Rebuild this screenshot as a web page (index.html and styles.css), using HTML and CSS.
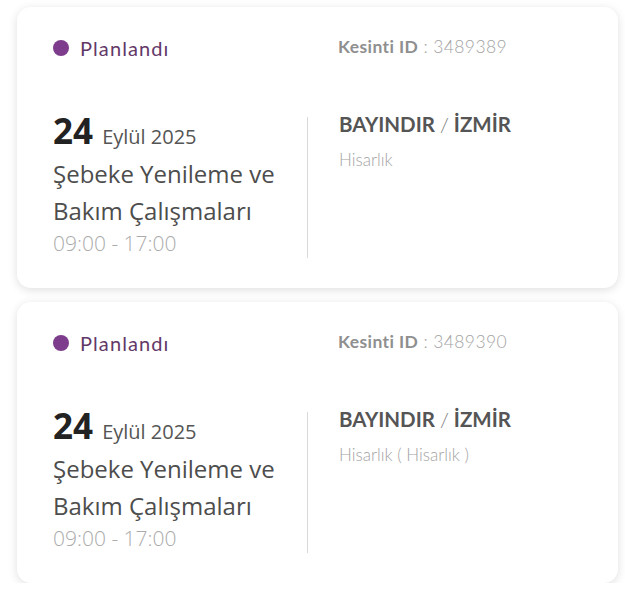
FILE: index.html
```html
<!DOCTYPE html>
<html lang="tr">
<head>
<meta charset="utf-8">
<link rel="stylesheet" href="styles.css">
</head>
<body>
<div class="list">
  <div class="card">
    <div class="top">
      <div class="status"><span class="dot"></span><span class="status-text">Planlandı</span></div>
      <div class="kid"><b>Kesinti ID</b> : 3489389</div>
    </div>
    <div class="body">
      <div class="left">
        <div class="date"><span class="day">24</span> <span class="month">Eylül 2025</span></div>
        <div class="title">Şebeke Yenileme ve<br>Bakım Çalışmaları</div>
        <div class="time">09:00 - 17:00</div>
      </div>
      <div class="divider"></div>
      <div class="right">
        <div class="place">BAYINDIR <span class="slash">/</span> İZMİR</div>
        <div class="sub">Hisarlık</div>
      </div>
    </div>
  </div>
  <div class="card">
    <div class="top">
      <div class="status"><span class="dot"></span><span class="status-text">Planlandı</span></div>
      <div class="kid"><b>Kesinti ID</b> : 3489390</div>
    </div>
    <div class="body">
      <div class="left">
        <div class="date"><span class="day">24</span> <span class="month">Eylül 2025</span></div>
        <div class="title">Şebeke Yenileme ve<br>Bakım Çalışmaları</div>
        <div class="time">09:00 - 17:00</div>
      </div>
      <div class="divider"></div>
      <div class="right">
        <div class="place">BAYINDIR <span class="slash">/</span> İZMİR</div>
        <div class="sub">Hisarlık ( Hisarlık )</div>
      </div>
    </div>
  </div>
</div>
</body>
</html>
```
FILE: styles.css
```css
html, body {
  margin: 0;
  padding: 0;
  background: #ffffff;
}
.list {
  padding: 7px 7px 0 17px;
  display: flex;
  flex-direction: column;
  gap: 14px;
}
.card {
  background: #fff;
  border-radius: 14px;
  box-shadow: 0 2px 10px rgba(0,0,0,0.13);
  padding: 29px 20px 30px 36px;
}
.top {
  display: grid;
  grid-template-columns: 285px 1fr;
  align-items: center;
  height: 24px;
}
.status {
  display: flex;
  align-items: center;
  gap: 11px;
  font-family: "Lato", sans-serif;
}
.dot {
  width: 16px;
  height: 16px;
  border-radius: 50%;
  background: #7d3c8c;
}
.status-text {
  font-size: 20px;
  line-height: 24px;
  letter-spacing: 1.1px;
  color: #633868;
}
.kid {
  font-family: "Lato", sans-serif;
  font-size: 17.5px;
  line-height: 24px;
  letter-spacing: 0.4px;
  color: #a3a3a3;
  font-weight: 300;
  margin-top: -2px;
}
.kid b {
  font-weight: 700;
  color: #8f8f8f;
}
.body {
  margin-top: 50px;
  display: grid;
  grid-template-columns: 254px 1px 1fr;
  align-items: start;
}
.left {
  padding-top: 6px;
  font-family: "Open Sans", sans-serif;
}
.date {
  font-size: 35px;
  line-height: 30px;
  color: #222;
}
.day {
  font-weight: 700;
}
.month {
  font-size: 20px;
  color: #555;
}
.title {
  margin-top: 3px;
  font-size: 24px;
  line-height: 37px;
  color: #4d4d4d;
}
.time {
  margin-top: 1px;
  font-size: 21px;
  line-height: 26px;
  color: #ababab;
  font-weight: 300;
}
.divider {
  margin-top: 7px;
  height: 141px;
  background: #d9d9d9;
}
.right {
  padding-left: 31px;
  font-family: "Lato", sans-serif;
}
.place {
  font-size: 20.5px;
  line-height: 28px;
  font-weight: 700;
  color: #555;
}
.slash {
  font-weight: 300;
  color: #777;
}
.sub {
  margin-top: 11px;
  font-size: 17px;
  line-height: 22px;
  font-weight: 300;
  color: #a3a3a3;
}
```
